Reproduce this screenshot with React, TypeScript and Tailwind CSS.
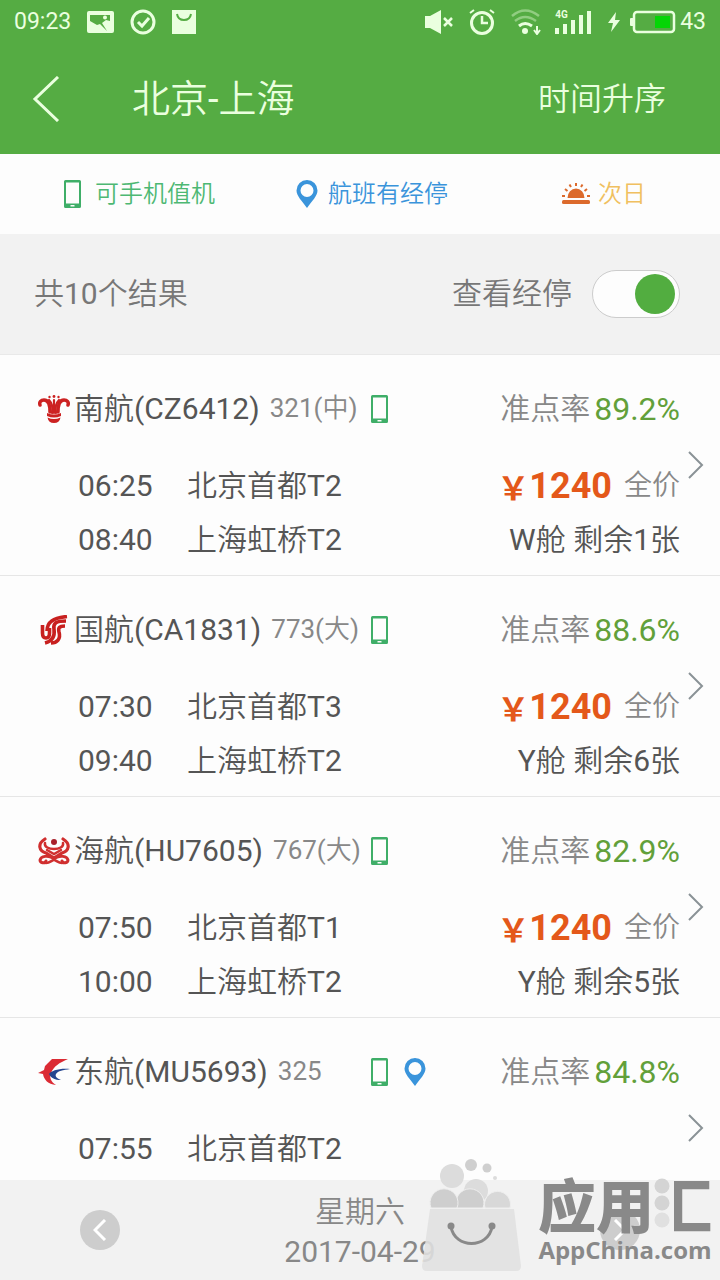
import { useState } from "react";
import clsx from "clsx";

type Airline = "southern" | "airchina" | "hainan" | "eastern";

interface Flight {
  airline: Airline;
  name: string;
  plane: string;
  rate: string;
  depart: string;
  from: string;
  arrive?: string;
  to?: string;
  price?: number;
  seats?: string;
  stopover?: boolean;
}

const flights: Flight[] = [
  {
    airline: "southern",
    name: "南航(CZ6412)",
    plane: "321(中)",
    rate: "89.2%",
    depart: "06:25",
    from: "北京首都T2",
    arrive: "08:40",
    to: "上海虹桥T2",
    price: 1240,
    seats: "W舱 剩余1张",
  },
  {
    airline: "airchina",
    name: "国航(CA1831)",
    plane: "773(大)",
    rate: "88.6%",
    depart: "07:30",
    from: "北京首都T3",
    arrive: "09:40",
    to: "上海虹桥T2",
    price: 1240,
    seats: "Y舱 剩余6张",
  },
  {
    airline: "hainan",
    name: "海航(HU7605)",
    plane: "767(大)",
    rate: "82.9%",
    depart: "07:50",
    from: "北京首都T1",
    arrive: "10:00",
    to: "上海虹桥T2",
    price: 1240,
    seats: "Y舱 剩余5张",
  },
  {
    airline: "eastern",
    name: "东航(MU5693)",
    plane: "325",
    rate: "84.8%",
    depart: "07:55",
    from: "北京首都T2",
    stopover: true,
  },
];

const PhoneIcon = () => (
  <svg width="17" height="28" viewBox="0 0 17 28" className="shrink-0">
    <path
      fillRule="evenodd"
      fill="#3fae68"
      d="M1.500 0h14A1.500 1.500 0 0 1 17 1.500v25a1.500 1.500 0 0 1-1.500 1.500h-14A1.500 1.500 0 0 1 0 26.500v-25A1.500 1.500 0 0 1 1.500 0zM2 2.500v21h13v-21zM6.500 25v1.500h4V25z"
    />
  </svg>
);

const PinIcon = () => (
  <svg width="22" height="28" viewBox="0 0 22 28" className="shrink-0">
    <path
      fillRule="evenodd"
      fill="#3a94db"
      d="M11 0a10.500 10.500 0 0 1 10.500 10.500C21.500 16 16 21 11 28 6 21 .5 16 .5 10.500A10.500 10.500 0 0 1 11 0zm0 4a6.500 6.500 0 1 0 0 13 6.500 6.500 0 0 0 0-13z"
    />
  </svg>
);

const SunriseIcon = () => (
  <svg width="28" height="22" viewBox="0 0 28 22" className="shrink-0">
    <g fill="none" stroke="#dc6a2c" strokeWidth="2">
      <path d="M14 0v3M7.500 1.500l1.500 2.500M20.500 1.500l-1.500 2.500M3 6l2.500 2M25 6l-2.500 2M0 13h3M25 13h3" />
    </g>
    <path d="M5.500 15a8.500 9.500 0 0 1 17 0z" fill="#dc6a2c" />
    <rect y="17" width="28" height="4" rx="1.500" fill="#dc6a2c" />
  </svg>
);

const AirlineLogo = ({ airline }: { airline: Airline }) => {
  if (airline === "southern") {
    return (
      <svg width="32" height="28" viewBox="0 0 32 28" className="shrink-0">
        <g fill="none" stroke="#cc2222" strokeLinecap="round">
          <path
            strokeWidth="3.500"
            d="M12 17C12 9 10 5 6 5 3 5 1 7 2 10M20 17c0-8 2-12 6-12 3 0 5 2 4 5"
          />
          <path
            strokeWidth="2.200"
            d="M14 18C15 12 13 7 11 5M18 18c-1-6 1-11 3-13M16 18V5"
          />
        </g>
        <g fill="#cc2222">
          <circle cx="11.500" cy="2" r="1.200" />
          <circle cx="16" cy="1.500" r="1.400" />
          <circle cx="20.500" cy="2" r="1.200" />
          <path d="M9 18q7 3 14 0v3q-7 3-14 0zM9.500 22.500q6.500 3 13 0-1 5.500-6.500 5.500t-6.500-5.500z" />
        </g>
      </svg>
    );
  }
  if (airline === "airchina") {
    return (
      <svg width="28" height="30" viewBox="0 0 28 30" className="shrink-0">
        <g fill="none" stroke="#c8201f" strokeWidth="3.600">
          <path d="M2.500 10v8q0 5 3.500 5t3.500-5v-5" />
          <path d="M7 16C7 7 13 3 27 1.500" />
          <path d="M26 6C16 6 13 8 14 14c1 7-1 12-9 14" />
          <path d="M25 11c-6 0-7 2-6 6 2 7-2 11-8 11" />
        </g>
      </svg>
    );
  }
  if (airline === "hainan") {
    return (
      <svg width="32" height="28" viewBox="0 0 32 28" className="shrink-0">
        <circle cx="16" cy="5" r="3" fill="#a8202a" />
        <g fill="none" stroke="#d02f2f" strokeLinecap="round">
          <path
            strokeWidth="3.200"
            d="M7 2C-1 7 1 14 8 16l8 5 8-5c7-2 9-9 1-14"
          />
          <path strokeWidth="2.500" d="M7 6c-1 4 4 6 9 6s10-2 9-6" />
          <path strokeWidth="2.500" d="M9 13l7 4 7-4" />
          <path
            strokeWidth="3"
            d="M15 21C10 18 3 19 2 23c0 3 5 4 6 1M17 21c5-3 12-2 13 2 0 3-5 4-6 1"
          />
          <path strokeWidth="2.500" d="M8 26c4 0 6-3 8-3s4 3 8 3" />
        </g>
      </svg>
    );
  }
  return (
    <svg width="32" height="26" viewBox="0 0 32 26" className="shrink-0">
      <path
        d="M30 0H14L7 7l-1 4-6 3 5 1c1 6 5 10 13 11-5-3-7-8-5-12C16 7 21 4 30 0z"
        fill="#db2b34"
      />
      <path
        d="M32 10C21 9 13 12 11 15c2 4 6 6 12 6-5-2-6-4-5-6 2-3 7-4 14-5z"
        fill="#24458f"
      />
    </svg>
  );
};

const Chevron = () => (
  <svg
    width="16"
    height="28"
    viewBox="0 0 16 28"
    fill="none"
    stroke="#8a9296"
    strokeWidth="2"
    className="mt-16 shrink-0"
  >
    <path d="M1 1l13 13L1 27" />
  </svg>
);

const StatusBar = () => (
  <div className="flex h-11 items-center justify-between px-3.5 text-[#eaffdf]">
    <div className="flex items-center gap-4">
      <span className="text-[23px]">09:23</span>
      <svg width="27" height="22" viewBox="0 0 27 22">
        <rect width="27" height="22" rx="2" fill="currentColor" />
        <path d="M3 4h20v6l-4-1-4 3 5 8-7-7-3 1-7-4z" fill="#55ac43" />
        <circle cx="18" cy="6.500" r="2" fill="currentColor" />
      </svg>
      <svg
        width="26"
        height="26"
        viewBox="0 0 26 26"
        fill="none"
        stroke="currentColor"
        strokeWidth="3"
      >
        <circle cx="13" cy="13" r="11" />
        <path d="M8 13l4 4 7-8" />
      </svg>
      <svg width="24" height="24" viewBox="0 0 24 24">
        <rect width="24" height="24" fill="currentColor" />
        <path
          d="M5 4q1 6 7 6t7-6"
          fill="none"
          stroke="#55ac43"
          strokeWidth="2"
        />
      </svg>
    </div>
    <div className="flex items-center">
      <svg width="28" height="24" viewBox="0 0 28 24" className="mr-4">
        <path d="M0 6h5l11-6v24L5 18H0z" fill="currentColor" />
        <path
          d="M19 8l8 8M27 8l-8 8"
          stroke="currentColor"
          strokeWidth="2.500"
        />
      </svg>
      <svg
        width="26"
        height="26"
        viewBox="0 0 26 26"
        fill="none"
        stroke="currentColor"
        strokeWidth="3"
        className="mr-4"
      >
        <circle cx="13" cy="14" r="10.500" />
        <path d="M13 7v7h6" strokeWidth="2.500" />
        <path d="M1 4l4-3M25 4l-4-3" strokeWidth="2" />
      </svg>
      <svg
        width="30"
        height="26"
        viewBox="0 0 30 26"
        fill="none"
        stroke="currentColor"
        className="mr-3.5"
      >
        <path
          d="M1 7q13-11 27 0M4 12q10-8 21 0"
          strokeWidth="2.500"
          opacity=".4"
        />
        <path d="M8 17q6-5 13 0" strokeWidth="3" />
        <circle cx="14" cy="22" r="3" fill="currentColor" stroke="none" />
        <path d="M26 17v7M23 21l3 4 3-4" strokeWidth="2" />
      </svg>
      <div className="relative mr-4">
        <span className="absolute top-0 left-0 text-[10px] leading-none font-bold">
          4G
        </span>
        <svg width="37" height="24" viewBox="0 0 37 24" fill="currentColor">
          <path d="M0 18h4v6H0zM8 14h4v10H8zM16 10h4v14h-4zM24 5h4v19h-4zM32 1h4v23h-4z" />
        </svg>
      </div>
      <svg width="12" height="20" viewBox="0 0 12 20" className="mr-2.5">
        <path d="M8 0L0 11h5l-2 9 9-12H7z" fill="currentColor" />
      </svg>
      <svg width="46" height="24" viewBox="0 0 46 24" className="mr-1">
        <rect y="8" width="4" height="8" rx="1" fill="currentColor" />
        <rect
          x="4"
          y="2"
          width="40"
          height="20"
          rx="3"
          fill="none"
          stroke="currentColor"
          strokeWidth="2.500"
        />
        <rect x="25" y="6" width="15" height="12" fill="#06d506" />
      </svg>
      <span className="text-[23px]">43</span>
    </div>
  </div>
);

interface FlightRowProps {
  flight: Flight;
}

const FlightRow: React.FC<FlightRowProps> = ({ flight }) => {
  return (
    <li className="border-b border-[#e6e6e6]">
      <a
        href="#flight"
        className="flex items-start gap-2 pt-8 pr-4 pb-2 pl-9.5 text-3xl"
      >
        <div className="flex-1">
          <div className="flex h-11 items-center">
            <div className="flex w-[333px] items-center">
              <span className="mr-1 flex w-8 justify-center">
                <AirlineLogo airline={flight.airline} />
              </span>
              <span className="mr-2.5 text-[#555]">{flight.name}</span>
              <span className="text-[26px] text-[#888]">{flight.plane}</span>
            </div>
            <PhoneIcon />
            {flight.stopover && (
              <span className="ml-4">
                <PinIcon />
              </span>
            )}
            <span className="mr-1 ml-auto text-[#888]">准点率</span>
            <span className="text-[32px] text-[#62a03a]">{flight.rate}</span>
          </div>
          <div className="mt-7 flex h-27 pl-10 text-[#555]">
            <dl className="grid grid-cols-[109px_auto] grid-rows-2 items-center">
              <dt>{flight.depart}</dt>
              <dd>{flight.from}</dd>
              <dt>{flight.arrive}</dt>
              <dd>{flight.to}</dd>
            </dl>
            {flight.price && (
              <div className="ml-auto grid grid-rows-2 items-center text-right">
                <div className="flex items-center justify-end">
                  <span className="font-['Noto_Sans_CJK_SC'] text-[32px] leading-10 font-bold text-[#e4581a]">
                    {"\uffe5"}
                  </span>
                  <span className="mr-3 text-4xl font-bold text-[#e4581a]">
                    {flight.price}
                  </span>
                  <span className="text-[28px] text-[#888]">全价</span>
                </div>
                <div>{flight.seats}</div>
              </div>
            )}
          </div>
        </div>
        <Chevron />
      </a>
    </li>
  );
};

const Watermark = () => (
  <div className="pointer-events-none absolute right-2 bottom-2 flex items-end gap-4">
    <svg width="100" height="114" viewBox="0 0 100 114">
      <g fill="#dcdcdc">
        <circle cx="30" cy="18" r="12" />
        <circle cx="54" cy="33" r="12" />
        <circle cx="49" cy="7" r="6" fill="#cfcfcf" />
        <circle cx="65" cy="10" r="4.500" fill="#cfcfcf" />
        <circle cx="73" cy="20" r="2" />
      </g>
      <g fill="#cecece" stroke="#eee">
        <path d="M63 50a13 13 0 1 1 25 0z" fill="#d8d8d8" />
        <path d="M35 50a14 14 0 1 1 26 0z" />
        <path d="M9 50a14 14 0 1 1 26 0z" />
      </g>
      <path
        d="M8 51h84l7 57q0 5-5 5H5q-5 0-5-5z"
        fill="#e0e0e0"
        fillOpacity=".88"
      />
      <g fill="#898989">
        <circle cx="29" cy="68" r="3.500" />
        <circle cx="70" cy="68" r="3.500" />
      </g>
      <path
        d="M29 69c4 22 37 22 41 0"
        fill="none"
        stroke="#898989"
        strokeWidth="3"
      />
    </svg>
    <div className="flex flex-col items-center pb-2 text-[#898989]">
      <div className="mb-1 flex font-['Noto_Sans_CJK_SC'] text-[58px] leading-[58px] font-black">
        应用
        {/* the water radical is drawn as three drops */}
        <span className="relative bg-linear-to-r from-transparent from-35% to-[#898989] to-35% bg-clip-text text-transparent">
          汇
          <svg
            width="16"
            height="52"
            viewBox="0 0 16 52"
            fill="#d4d4d4"
            className="absolute top-1 left-0"
          >
            <circle cx="8" cy="8" r="7.500" />
            <circle cx="8" cy="25" r="7.500" />
            <circle cx="8" cy="42" r="7.500" fill="#e0e0e0" />
          </svg>
        </span>
      </div>
      <div className="font-['Open_Sans'] text-2xl leading-7 font-bold">
        AppChina.com
      </div>
    </div>
  </div>
);

const CircleArrow = ({ next }: { next?: boolean }) => (
  <button
    type="button"
    aria-label={next ? "后一天" : "前一天"}
    className="flex size-10 items-center justify-center rounded-full bg-[#cdcdcd]"
  >
    <svg
      width="14"
      height="22"
      viewBox="0 0 14 22"
      fill="none"
      stroke="#fff"
      strokeWidth="3"
      className={clsx(next && "rotate-180")}
    >
      <path d="M12 1L2 11l10 10" />
    </svg>
  </button>
);

const App = () => {
  const [showStops, setShowStops] = useState(true);

  return (
    <div className="relative flex h-screen flex-col overflow-hidden bg-[#fdfdfd] font-[Roboto,'Noto_Sans_CJK_SC_DemiLight','Noto_Sans_CJK_SC_Light','Noto_Sans_CJK_SC',sans-serif]">
      <header className="shrink-0 bg-[#55ac43] text-[#eaffdf]">
        <StatusBar />
        <div className="flex h-[110px] items-center pr-13.5 pl-8">
          <button type="button" aria-label="返回" className="mr-18">
            <svg
              width="28"
              height="46"
              viewBox="0 0 28 46"
              fill="none"
              stroke="currentColor"
              strokeWidth="3"
            >
              <path d="M26 1L3 23l23 22" />
            </svg>
          </button>
          <h1 className="text-[38px]">北京-上海</h1>
          <button type="button" className="ml-auto text-[32px]">
            时间升序
          </button>
        </div>
      </header>

      <ul className="grid h-20 shrink-0 grid-cols-[232fr_266fr_158fr] items-center pl-16 text-2xl">
        <li className="flex items-center gap-3.5 text-[#4db873]">
          <PhoneIcon />
          可手机值机
        </li>
        <li className="flex items-center gap-2.5 text-[#3a94db]">
          <PinIcon />
          航班有经停
        </li>
        <li className="flex items-center gap-2 text-[#f0c060]">
          <SunriseIcon />
          次日
        </li>
      </ul>

      <div className="flex h-[121px] shrink-0 items-center justify-between border-b border-[#e9e9e9] bg-[#f2f2f2] pr-10 pl-8.5 text-3xl text-[#777]">
        <p>共10个结果</p>
        <label className="flex items-center gap-5">
          查看经停
          <input
            type="checkbox"
            checked={showStops}
            onChange={() => setShowStops(!showStops)}
            className="peer sr-only"
          />
          <span className="flex h-12 w-22 items-center rounded-full border border-[#ccc] bg-[#fdfdfd] px-1 peer-checked:justify-end">
            <span className="size-10 rounded-full bg-[#52ad40]" />
          </span>
        </label>
      </div>

      <ul className="min-h-0 flex-1 overflow-hidden">
        {flights.map((flight) => (
          <FlightRow key={flight.name} flight={flight} />
        ))}
      </ul>

      <footer className="flex h-25 shrink-0 items-center justify-between bg-[#f2f2f2] px-20">
        <CircleArrow />
        <div className="pt-1 text-center text-3xl text-[#888]">
          <div className="leading-10">星期六</div>
          <div className="leading-10">2017-04-29</div>
        </div>
        <CircleArrow next />
      </footer>
      <Watermark />
    </div>
  );
};

export default App;
